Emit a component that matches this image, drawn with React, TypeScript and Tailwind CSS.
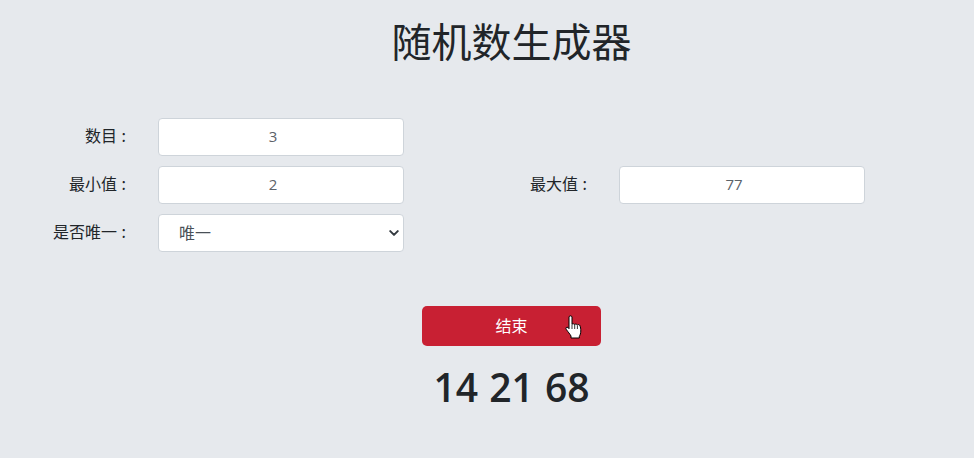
const cjk = "font-['Noto_Sans_CJK_SC',sans-serif]";

function Label({ children }: { children: string }) {
  return (
    <label className="relative -top-[2px] whitespace-nowrap pr-[5px] text-right [word-spacing:1px] font-['Noto_Sans_CJK_SC',sans-serif]">
      {children}
    </label>
  );
}

function Field({ value }: { value: string }) {
  return (
    <input
      readOnly
      value={value}
      className="h-[38px] w-full rounded border border-[#ced4da] bg-white pr-[16px] pb-[2px] text-center text-[15px] text-[#5b6269] outline-none"
    />
  );
}

export default function App() {
  return (
    <div className="min-h-[458px] bg-[#e6e9ed] pl-[49px] text-[#212529] font-['Open_Sans','Noto_Sans_CJK_SC',sans-serif]">
      <h1 className={`pt-[16px] text-center text-[40px] leading-[48px] font-normal ${cjk}`}>随机数生成器</h1>
      <div className="mt-[54px] grid grid-cols-[82px_246px_161px_246px] gap-x-[27px] gap-y-[10px] items-center text-[16px]">
        <Label>数目 :</Label>
        <Field value="3" />
        <div className="col-span-2" />
        <Label>最小值 :</Label>
        <Field value="2" />
        <Label>最大值 :</Label>
        <Field value="77" />
        <Label>是否唯一 :</Label>
        <div className="relative h-[38px] w-full rounded border border-[#ced4da] bg-white text-[#495057]">
          <div className={`pl-[20px] leading-[35px] ${cjk}`}>唯一</div>
          <svg className="absolute right-[4px] top-[13px]" width="10" height="10" viewBox="0 0 16 16" fill="none" stroke="#343a40" strokeWidth="3.2" strokeLinecap="round" strokeLinejoin="round">
            <path d="M2 5l6 6 6-6" />
          </svg>
        </div>
        <div className="col-span-2" />
      </div>
      <div className="mt-[54px] flex justify-center">
        <button className={`relative h-[40px] w-[179px] rounded-[5px] bg-[#c82033] pb-[2px] text-[16px] text-white ${cjk}`}>
          结束
          <svg className="absolute left-[143px] top-[9px]" width="18" height="24" viewBox="0 0 18 24">
            <path d="M4 2c0-1.500 3-1.500 3 0v7.500c0-1 2.600-1 2.700.3 0-1 2.600-1 2.700.4.300-1 2.500-.8 2.600.7.500 1.100.8 3 .8 5.100 0 2.500-.8 4-1.500 5.500v1.500H6V21C5 19 3 17 1.200 14.300c-.8-1.300.4-2.800 1.800-1.800l1 1.200z" fill="#fff" stroke="#000" strokeWidth="1" strokeLinejoin="round" />
            <path d="M7 10v4M9.700 10v4M12.400 10.500V14" stroke="#000" strokeWidth=".8" fill="none" />
          </svg>
        </button>
      </div>
      <div className="mt-[14px] text-center text-[39px] leading-[54px] font-semibold [word-spacing:1px]">14 21 68</div>
    </div>
  );
}
